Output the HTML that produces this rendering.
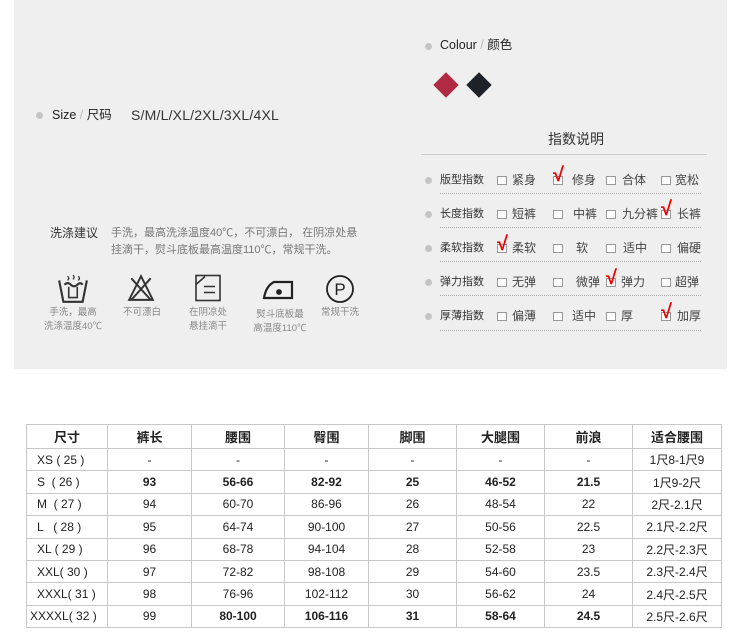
<!DOCTYPE html>
<html><head><meta charset="utf-8"><style>
*{margin:0;padding:0;box-sizing:border-box}
body{width:750px;height:637px;background:#fff;position:relative;overflow:hidden;font-family:"Liberation Sans","Noto Sans CJK SC",sans-serif;color:#333}
.a{position:absolute;white-space:nowrap}
#panel{position:absolute;left:14px;top:0;width:713px;height:369px;background:#efefef}
.dot{position:absolute;width:7px;height:7px;border-radius:50%;background:#c4c4c4}
.cb{position:absolute;width:10px;height:9px;border:1px solid #999;background:#fff}
.t{position:absolute;font-size:12px;color:#444;white-space:nowrap;line-height:14px}
.lbl{position:absolute;font-size:11px;color:#333;white-space:nowrap;line-height:14px}
.dl{position:absolute;left:440px;width:261px;border-top:1px dotted #aaa;height:0}
.ck{position:absolute;color:#e00;font-size:20px;font-weight:bold;line-height:1}
.cap{position:absolute;font-size:9.5px;color:#888;text-align:center;line-height:14px;white-space:nowrap}
table{position:absolute;left:26px;top:424px;border-collapse:collapse;font-size:12px;color:#222}
td{border:1px solid #c8c8c8;text-align:center;height:22.4px;padding:0}
tr.h td{height:24px;font-weight:bold;font-size:13px}
</style></head><body>
<div id="panel"></div>

<div class="dot" style="left:425px;top:43px"></div>
<div class="a" style="left:440px;top:38px;font-size:12.5px;color:#222;line-height:15px">Colour <span style="color:#bbb">/</span> 颜色</div>
<div class="a" style="left:437px;top:76px;width:18px;height:18px;background:#b02a44;transform:rotate(45deg)"></div>
<div class="a" style="left:470px;top:76px;width:18px;height:18px;background:#1d2229;transform:rotate(45deg)"></div>

<div class="dot" style="left:36px;top:112px"></div>
<div class="a" style="left:52px;top:108px;font-size:12.5px;color:#222;line-height:15px">Size <span style="color:#bbb">/</span> 尺码</div>
<div class="a" style="left:131px;top:107px;font-size:14px;color:#333;letter-spacing:0.2px;line-height:16px">S/M/L/XL/2XL/3XL/4XL</div>

<div class="a" style="left:548px;top:131px;font-size:14px;color:#333;line-height:17px">指数说明</div>
<div class="a" style="left:421px;top:154px;width:286px;height:1px;background:#ccc"></div>

<div class="dot" style="left:425px;top:177px"></div><div class="lbl" style="left:440px;top:173px">版型指数</div>
<div class="cb" style="left:497px;top:176px"></div><div class="t" style="left:512px;top:173px">紧身</div>
<div class="cb" style="left:553px;top:176px"></div><div class="ck" style="left:553px;top:165px">√</div><div class="t" style="left:572px;top:173px">修身</div>
<div class="cb" style="left:606px;top:176px"></div><div class="t" style="left:622px;top:173px">合体</div>
<div class="cb" style="left:661px;top:176px"></div><div class="t" style="left:675px;top:173px">宽松</div>
<div class="dl" style="top:193px"></div>

<div class="dot" style="left:425px;top:211px"></div><div class="lbl" style="left:440px;top:207px">长度指数</div>
<div class="cb" style="left:497px;top:210px"></div><div class="t" style="left:512px;top:207px">短裤</div>
<div class="cb" style="left:553px;top:210px"></div><div class="t" style="left:573px;top:207px">中裤</div>
<div class="cb" style="left:606px;top:210px"></div><div class="t" style="left:622px;top:207px">九分裤</div>
<div class="cb" style="left:661px;top:210px"></div><div class="ck" style="left:661px;top:199px">√</div><div class="t" style="left:677px;top:207px">长裤</div>
<div class="dl" style="top:227px"></div>

<div class="dot" style="left:425px;top:245px"></div><div class="lbl" style="left:440px;top:241px">柔软指数</div>
<div class="cb" style="left:497px;top:244px"></div><div class="ck" style="left:497px;top:234px">√</div><div class="t" style="left:512px;top:241px">柔软</div>
<div class="cb" style="left:553px;top:244px"></div><div class="t" style="left:576px;top:241px">软</div>
<div class="cb" style="left:606px;top:244px"></div><div class="t" style="left:623px;top:241px">适中</div>
<div class="cb" style="left:661px;top:244px"></div><div class="t" style="left:677px;top:241px">偏硬</div>
<div class="dl" style="top:261px"></div>

<div class="dot" style="left:425px;top:279px"></div><div class="lbl" style="left:440px;top:275px">弹力指数</div>
<div class="cb" style="left:497px;top:278px"></div><div class="t" style="left:512px;top:275px">无弹</div>
<div class="cb" style="left:553px;top:278px"></div><div class="t" style="left:576px;top:275px">微弹</div>
<div class="cb" style="left:606px;top:278px"></div><div class="ck" style="left:606px;top:268px">√</div><div class="t" style="left:621px;top:275px">弹力</div>
<div class="cb" style="left:661px;top:278px"></div><div class="t" style="left:675px;top:275px">超弹</div>
<div class="dl" style="top:295px"></div>

<div class="dot" style="left:425px;top:313px"></div><div class="lbl" style="left:440px;top:309px">厚薄指数</div>
<div class="cb" style="left:497px;top:312px"></div><div class="t" style="left:512px;top:309px">偏薄</div>
<div class="cb" style="left:553px;top:312px"></div><div class="t" style="left:572px;top:309px">适中</div>
<div class="cb" style="left:606px;top:312px"></div><div class="t" style="left:621px;top:309px">厚</div>
<div class="cb" style="left:661px;top:312px"></div><div class="ck" style="left:661px;top:302px">√</div><div class="t" style="left:677px;top:309px">加厚</div>
<div class="dl" style="top:330px"></div>

<div class="a" style="left:50px;top:226px;font-size:12px;color:#333;line-height:15px">洗涤建议</div>
<div class="a" style="left:111px;top:225px;font-size:11px;color:#777;line-height:17px">手洗，最高洗涤温度40℃，不可漂白， 在阴凉处悬<br>挂滴干，熨斗底板最高温度110℃，常规干洗。</div>

<svg class="a" style="left:57px;top:274px" width="32" height="30" viewBox="0 0 30 28" fill="none" stroke="#333" stroke-width="2">
<path d="M2 6 L6 26 H24 L28 6"/><path d="M7 10 Q10 7 13 10 T19 10 T24 10"/><path d="M11 12 V22 H19 V12" stroke-width="1.5"/><path d="M10 2 Q12 4 10 6 M15 1 Q17 3 15 5 M20 2 Q22 4 20 6" stroke-width="1.2"/></svg>
<svg class="a" style="left:127px;top:274px" width="28" height="28" viewBox="0 0 26 26" fill="none" stroke="#333" stroke-width="1.8">
<path d="M13 2 L2 24 H24 Z"/><path d="M4 4 L22 24 M22 4 L4 24"/></svg>
<svg class="a" style="left:195px;top:274px" width="26" height="28" viewBox="0 0 26 27" fill="none" stroke="#333" stroke-width="1.6">
<rect x="1" y="1" width="24" height="25"/><path d="M1 10 L10 2 M9 12 H20 M9 18 H20"/></svg>
<svg class="a" style="left:262px;top:277px" width="32" height="24" viewBox="0 0 32 22" fill="none" stroke="#222" stroke-width="2.2">
<path d="M2 20 H30 V4 H12 Q4 8 2 20 Z"/><circle cx="17" cy="14" r="1.8" fill="#222"/></svg>
<svg class="a" style="left:325px;top:274px" width="30" height="30" viewBox="0 0 30 30" fill="none" stroke="#222" stroke-width="1.8">
<circle cx="15" cy="15" r="13"/><text x="15" y="21" text-anchor="middle" font-size="17" font-family="Liberation Sans" fill="#222" stroke="none">P</text></svg>

<div class="cap" style="left:38px;top:306px;width:70px">手洗，最高<br>洗涤温度40℃</div>
<div class="cap" style="left:112px;top:306px;width:60px">不可漂白</div>
<div class="cap" style="left:178px;top:306px;width:60px">在阴凉处<br>悬挂滴干</div>
<div class="cap" style="left:245px;top:308px;width:70px">熨斗底板最<br>高温度110℃</div>
<div class="cap" style="left:310px;top:306px;width:60px">常规干洗</div>

<table>
<colgroup><col style="width:81px"><col style="width:84px"><col style="width:93px"><col style="width:84px"><col style="width:88px"><col style="width:88px"><col style="width:88px"><col style="width:89px"></colgroup>
<tr class="h"><td>尺寸</td><td>裤长</td><td>腰围</td><td>臀围</td><td>脚围</td><td>大腿围</td><td>前浪</td><td>适合腰围</td></tr>
<tr><td style="text-align:left;padding-left:10px">XS ( 25 )</td><td>-</td><td>-</td><td>-</td><td>-</td><td>-</td><td>-</td><td>1尺8-1尺9</td></tr>
<tr><td style="text-align:left;padding-left:10px">S &nbsp;( 26 )</td><td><b>93</b></td><td><b>56-66</b></td><td><b>82-92</b></td><td><b>25</b></td><td><b>46-52</b></td><td><b>21.5</b></td><td>1尺9-2尺</td></tr>
<tr><td style="text-align:left;padding-left:10px">M &nbsp;( 27 )</td><td>94</td><td>60-70</td><td>86-96</td><td>26</td><td>48-54</td><td>22</td><td>2尺-2.1尺</td></tr>
<tr><td style="text-align:left;padding-left:10px">L &nbsp;&nbsp;( 28 )</td><td>95</td><td>64-74</td><td>90-100</td><td>27</td><td>50-56</td><td>22.5</td><td>2.1尺-2.2尺</td></tr>
<tr><td style="text-align:left;padding-left:10px">XL ( 29 )</td><td>96</td><td>68-78</td><td>94-104</td><td>28</td><td>52-58</td><td>23</td><td>2.2尺-2.3尺</td></tr>
<tr><td style="text-align:left;padding-left:10px">XXL( 30 )</td><td>97</td><td>72-82</td><td>98-108</td><td>29</td><td>54-60</td><td>23.5</td><td>2.3尺-2.4尺</td></tr>
<tr><td style="text-align:left;padding-left:10px">XXXL( 31 )</td><td>98</td><td>76-96</td><td>102-112</td><td>30</td><td>56-62</td><td>24</td><td>2.4尺-2.5尺</td></tr>
<tr><td style="text-align:left;padding-left:3px">XXXXL( 32 )</td><td>99</td><td><b>80-100</b></td><td><b>106-116</b></td><td><b>31</b></td><td><b>58-64</b></td><td><b>24.5</b></td><td>2.5尺-2.6尺</td></tr>
</table>
</body></html>
